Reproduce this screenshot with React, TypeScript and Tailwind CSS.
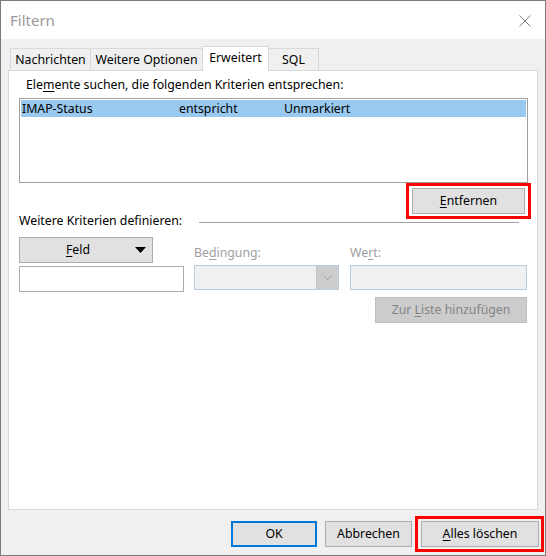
import React from 'react';

const font = { fontFamily: '"Noto Sans", "Segoe UI", sans-serif' };

function Tab({ label, active, width }: { label: string; active?: boolean; width: string }) {
  if (active) {
    return (
      <div
        className={`${width} h-[25px] -ml-px mb-[-1px] relative z-10 bg-white border border-b-0 border-[#d9d9d9] flex items-start justify-center pt-[2px] text-[12.3px] text-black`}
      >
        {label}
      </div>
    );
  }
  return (
    <div
      className={`${width} h-[22px] -ml-px first:ml-0 bg-[#f0f0f0] border border-b-0 border-[#d9d9d9] flex items-center justify-center pt-[2px] text-[12.3px] text-black`}
    >
      {label}
    </div>
  );
}

function Btn({ children, className = '' }: { children: React.ReactNode; className?: string }) {
  return (
    <div
      className={`h-[26px] bg-[#e1e1e1] border border-[#adadad] flex items-center justify-center text-[12.3px] text-black ${className}`}
    >
      {children}
    </div>
  );
}

export default function App() {
  return (
    <div className="w-[546px] h-[556px] border border-[#7a7a7a] bg-[#f0f0f0] flex flex-col select-none" style={font}>
      {/* Titelleiste */}
      <div className="h-[38px] bg-white flex items-center justify-between pl-[9px] pr-[14px]">
        <span className="text-[15px] text-[#999999]">Filtern</span>
        <svg width="12" height="12" viewBox="0 0 12 12" className="mt-[1px]">
          <path d="M0.5 0.5 L11.5 11.5 M11.5 0.5 L0.5 11.5" stroke="#7f7f7f" strokeWidth="1" fill="none" />
        </svg>
      </div>

      <div className="pt-[7px] px-[7px] flex flex-col">
        {/* Reiter */}
        <div className="flex items-end h-[24px] pl-[2px]">
          <Tab label="Nachrichten" width="w-[81px]" />
          <Tab label="Weitere Optionen" width="w-[113px]" />
          <Tab label="Erweitert" width="w-[67px]" active />
          <Tab label="SQL" width="w-[51px]" />
        </div>

        {/* Reiterinhalt */}
        <div className="h-[440px] bg-white border border-[#d9d9d9] flex flex-col text-[12.3px] text-black">
          <div className="pt-[6px] pl-[17px] leading-[16px]">
            Ele<span className="underline underline-offset-2">m</span>ente suchen, die folgenden Kriterien entsprechen:
          </div>

          <div className="mt-[5px] ml-[10px] w-[509px] h-[85px] border border-[#a0a0a0] p-px">
            <div className="h-[17px] bg-[#99c9ef] flex items-center leading-[16px]">
              <span className="pl-[1px] w-[158px]">IMAP-Status</span>
              <span className="w-[105px]">entspricht</span>
              <span>Unmarkiert</span>
            </div>
          </div>

          <div className="flex justify-end pr-[12px] mt-[5px]">
            <div className="relative">
              <Btn className="w-[113px] h-[25px]">
                <span>
                  <span className="underline underline-offset-2">E</span>ntfernen
                </span>
              </Btn>
              <div className="absolute -left-[6px] -right-[6px] -top-[5px] -bottom-[5px] border-[3px] border-[#ff0000]" />
            </div>
          </div>

          <div className="flex items-center leading-[16px] -mt-px">
            <span className="pl-[10px]">Weitere Kriterien definieren:</span>
            <div className="ml-[17px] mr-[18px] flex-1 h-px bg-[#a0a0a0] mt-[3px]" />
          </div>

          <div className="flex ml-[10px] mt-[8px] gap-[10px]">
            <div className="w-[165px] flex flex-col">
              <Btn className="w-[134px] h-[25px] relative">
                <span className="-ml-[16px]">
                  <span className="underline underline-offset-2">F</span>eld
                </span>
                <svg width="11" height="6" viewBox="0 0 11 6" className="absolute right-[6px] top-[9px]">
                  <path d="M0 0 L11 0 L5.5 6 Z" fill="#000" />
                </svg>
              </Btn>
              <div className="mt-[3px] h-[26px] border border-[#acacac] bg-white" />
            </div>

            <div className="w-[145px] flex flex-col">
              <div className="h-[25px] flex items-end text-[#a0a0a0] leading-[16px] pb-[1px]">
                <span>
                  Be<span className="underline underline-offset-2">d</span>ingung:
                </span>
              </div>
              <div className="mt-[3px] h-[25px] border border-[#bccbdc] bg-[#f0f0f0] flex justify-end">
                <div className="w-[22px] h-full bg-[#cccccc] border-l border-[#c0c0c0] flex items-center justify-center">
                  <svg width="9" height="5" viewBox="0 0 9 5">
                    <path d="M0.5 0.5 L4.5 4.5 L8.5 0.5" stroke="#a0a0a0" strokeWidth="1" fill="none" />
                  </svg>
                </div>
              </div>
            </div>

            <div className="w-[177px] ml-px flex flex-col">
              <div className="h-[25px] flex items-end text-[#a0a0a0] leading-[16px] pb-[1px]">
                <span>
                  We<span className="underline underline-offset-2">r</span>t:
                </span>
              </div>
              <div className="mt-[3px] h-[25px] border border-[#bccbdc] bg-[#f0f0f0]" />
              <div className="mt-[7px] flex justify-end">
                <div className="w-[152px] h-[26px] bg-[#cccccc] border border-[#bfbfbf] flex items-center justify-center text-[#838383]">
                  <span>
                    Zur <span className="underline underline-offset-2">L</span>iste hinzufügen
                  </span>
                </div>
              </div>
            </div>
          </div>
        </div>

        {/* Schaltflächen */}
        <div className="mt-[11px] flex justify-end mr-[-1px] gap-[8px] text-[12.3px]">
          <div className="w-[86px] h-[26px] bg-[#e1e1e1] border-2 border-[#0078d7] flex items-center justify-center">OK</div>
          <Btn className="w-[87px]">Abbrechen</Btn>
          <div className="relative ml-[1px]">
            <Btn className="w-[118px]">
              <span>
                <span className="underline underline-offset-2">A</span>lles löschen
              </span>
            </Btn>
            <div className="absolute -left-[6px] -right-[5px] -top-[5px] -bottom-[5px] border-[3px] border-[#ff0000]" />
          </div>
        </div>
      </div>
    </div>
  );
}
